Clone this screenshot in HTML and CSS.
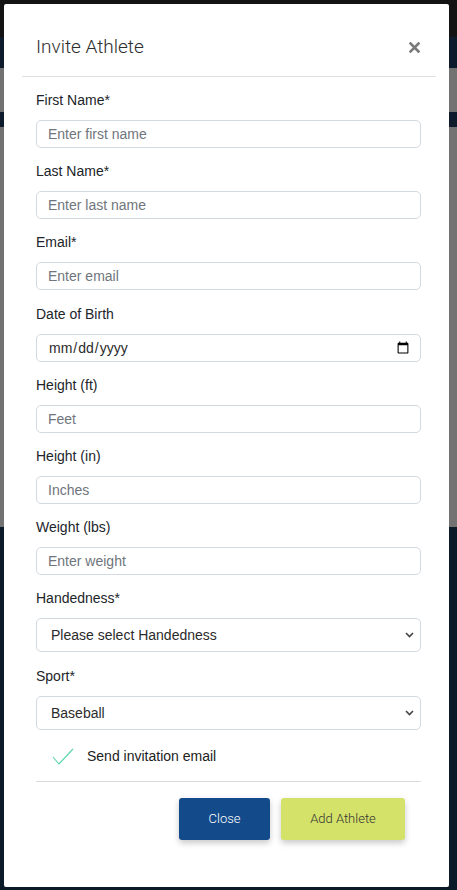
FILE: index.html
```html
<!DOCTYPE html>
<html lang="en">
<head>
<meta charset="utf-8">
<title>Invite Athlete</title>
<link rel="stylesheet" href="styles.css">
</head>
<body>
<div class="modal">
  <div class="modal-header">
    <h2 class="modal-title">Invite Athlete</h2>
    <button class="close-x" type="button" aria-label="Close">
      <svg width="11" height="11" viewBox="0 0 11 11"><path d="M1.5 1.5 L9.5 9.5 M9.5 1.5 L1.5 9.5" stroke="#7a7a7a" stroke-width="2.6" stroke-linecap="square"/></svg>
    </button>
  </div>
  <form class="modal-body">
    <div class="group">
      <label class="label">First Name*</label>
      <input class="field" type="text" placeholder="Enter first name">
    </div>
    <div class="group">
      <label class="label">Last Name*</label>
      <input class="field" type="text" placeholder="Enter last name">
    </div>
    <div class="group">
      <label class="label">Email*</label>
      <input class="field" type="text" placeholder="Enter email">
    </div>
    <div class="group">
      <label class="label">Date of Birth</label>
      <input class="field date" type="date">
    </div>
    <div class="group">
      <label class="label">Height (ft)</label>
      <input class="field" type="text" placeholder="Feet">
    </div>
    <div class="group">
      <label class="label">Height (in)</label>
      <input class="field" type="text" placeholder="Inches">
    </div>
    <div class="group">
      <label class="label">Weight (lbs)</label>
      <input class="field" type="text" placeholder="Enter weight">
    </div>
    <div class="group">
      <label class="label">Handedness*</label>
      <div class="select-wrap">
        <select class="select"><option>Please select Handedness</option></select>
        <svg class="chev" width="9" height="6" viewBox="0 0 9 6"><path d="M1 1 L4.5 4.5 L8 1" fill="none" stroke="#444" stroke-width="1.6"/></svg>
      </div>
    </div>
    <div class="group">
      <label class="label">Sport*</label>
      <div class="select-wrap">
        <select class="select"><option>Baseball</option></select>
        <svg class="chev" width="9" height="6" viewBox="0 0 9 6"><path d="M1 1 L4.5 4.5 L8 1" fill="none" stroke="#444" stroke-width="1.6"/></svg>
      </div>
    </div>
    <div class="check-row">
      <svg class="check" width="22" height="17" viewBox="0 0 22 17"><path d="M1 9 L7 16 L21 1" fill="none" stroke="#58d3ad" stroke-width="1.1"/></svg>
      <span class="check-text">Send invitation email</span>
    </div>
    <div class="footer">
      <button class="btn btn-close" type="button">Close</button>
      <button class="btn btn-add" type="button">Add Athlete</button>
    </div>
  </form>
</div>
</body>
</html>
```
FILE: styles.css
```css
* { box-sizing: border-box; }
html, body { margin: 0; padding: 0; }
body {
  width: 457px;
  height: 890px;
  overflow: hidden;
  font-family: "Liberation Sans", Arial, sans-serif;
  background:
    linear-gradient(to bottom,
      #131313 0 37px,
      #0d1b2c 37px 68px,
      #727272 68px 112px,
      #0d1b2c 112px 127px,
      #727272 127px 527px,
      #0b1a28 527px 890px);
  padding: 4px 8px 0 4px;
}
.modal {
  width: 445px;
  height: 883px;
  background: #fff;
  border-radius: 2px;
  display: flex;
  flex-direction: column;
}
.modal-header {
  margin: 0 13px 0 18px;
  padding: 32px 16px 0 14px;
  height: 73px;
  border-bottom: 1px solid #dfe1e4;
  display: flex;
  align-items: flex-start;
  justify-content: space-between;
}
.modal-title {
  margin: 0;
  font-family: Roboto, "DejaVu Sans", sans-serif;
  font-weight: 300;
  font-size: 19px;
  line-height: 22px;
  color: #2e2e2e;
}
.close-x {
  border: 0;
  background: none;
  padding: 0;
  margin-top: 6px;
  width: 11px;
  height: 11px;
  display: flex;
}
.modal-body {
  margin: 0;
  padding: 13px 28px 0 32px;
  display: flex;
  flex-direction: column;
}
.group {
  display: flex;
  flex-direction: column;
  margin-bottom: 13.2px;
}
.label {
  font-size: 14px;
  line-height: 21px;
  color: #212529;
  margin-bottom: 9px;
}
.field {
  height: 28px;
  width: 385px;
  border: 1px solid #d3d9e1;
  border-radius: 5px;
  padding: 0 11px;
  font-family: "Liberation Sans", Arial, sans-serif;
  font-size: 14px;
  color: #333;
  background: #fff;
  outline: none;
}
.field::placeholder { color: #6f757c; }
.date { color: #2b2b2b; padding-right: 8px; }
.select-wrap {
  position: relative;
  width: 385px;
}
.select {
  appearance: none;
  -webkit-appearance: none;
  width: 385px;
  height: 34px;
  border: 1px solid #d3d9e1;
  border-radius: 5px;
  padding: 0 14px;
  font-family: "Liberation Sans", Arial, sans-serif;
  font-size: 14px;
  color: #2b2b2b;
  background: #fff;
  outline: none;
}
.chev {
  position: absolute;
  right: 7px;
  top: 14px;
  pointer-events: none;
}
.check-row {
  display: flex;
  align-items: center;
  height: 26px;
  padding-left: 16px;
}
.check { margin-right: 13px; margin-top: 2px; }
.check-text {
  font-size: 14px;
  color: #222;
}
.footer {
  margin-top: 12px;
  width: 385px;
  border-top: 1px solid #dcdcdc;
  padding: 16px 16px 0 0;
  display: flex;
  justify-content: flex-end;
  gap: 11px;
}
.btn {
  height: 42px;
  border: 0;
  border-radius: 3px;
  font-family: Roboto, "DejaVu Sans", sans-serif;
  font-weight: 300;
  font-size: 13px;
  box-shadow: 0 3px 6px rgba(0,0,0,0.22);
}
.btn-close {
  width: 91px;
  background: #134a8a;
  color: #fff;
}
.btn-add {
  width: 124px;
  background: #d4e26a;
  color: #333;
}
```
